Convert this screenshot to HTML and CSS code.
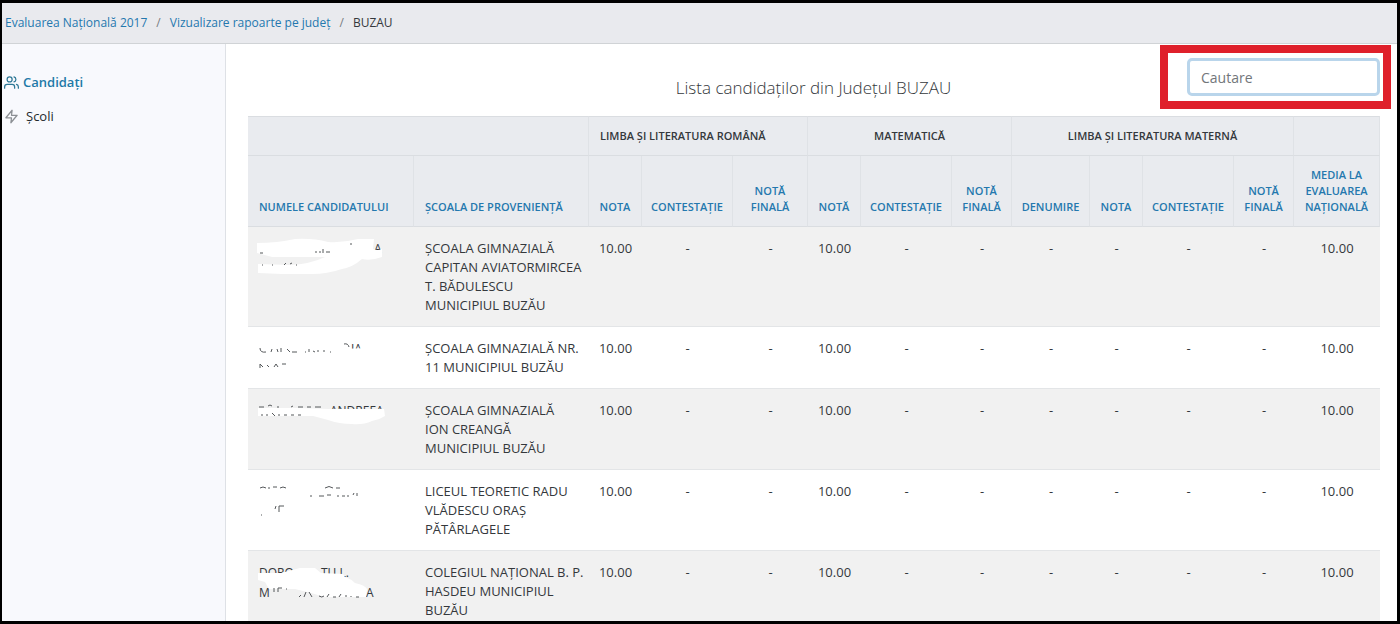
FILE: index.html
```html
<!DOCTYPE html>
<html lang="ro">
  <head>
    <meta charset="utf-8">
    <title>Evaluarea Națională 2017 - BUZAU</title>
    <link rel="stylesheet" href="styles.css">
  </head>
  <body>
    <nav class="breadcrumb">
      <a href="#">Evaluarea Națională 2017</a>
      <span class="separator">/</span>
      <a href="#">Vizualizare rapoarte pe județ</a>
      <span class="separator">/</span>
      <span>BUZAU</span>
    </nav>

    <div class="page">
      <nav class="sidebar">
        <a href="#" class="menu-item active">
          <svg class="menu-icon" viewBox="0 0 24 24">
            <path d="M17 21v-2a4 4 0 0 0-4-4H5a4 4 0 0 0-4 4v2"></path>
            <circle cx="9" cy="7" r="4"></circle>
            <path d="M23 21v-2a4 4 0 0 0-3-3.87"></path>
            <path d="M16 3.13a4 4 0 0 1 0 7.75"></path>
          </svg>
          Candidați
        </a>
        <a href="#" class="menu-item">
          <svg class="menu-icon" viewBox="0 0 24 24">
            <path d="M13 2L3 14h9l-1 8 10-12h-9l1-8z"></path>
          </svg>
          <span class="menu-label">Școli</span>
        </a>
      </nav>

      <main class="content">
        <header class="content-header">
          <h1 class="title">Lista candidaților din Județul BUZAU</h1>
          <div class="search-box">
            <input type="text" class="search-input" placeholder="Cautare" aria-label="Cautare">
          </div>
        </header>

        <table class="results">
          <colgroup>
            <col class="col-name">
            <col class="col-school">
            <col class="col-grade">
            <col class="col-appeal">
            <col class="col-final-wide">
            <col class="col-grade">
            <col class="col-appeal">
            <col class="col-final">
            <col class="col-language">
            <col class="col-grade">
            <col class="col-appeal">
            <col class="col-final">
            <col class="col-average">
          </colgroup>
          <thead>
            <tr class="groups">
              <th colspan="2"></th>
              <th colspan="3" class="left">LIMBA ȘI LITERATURA ROMÂNĂ</th>
              <th colspan="3">MATEMATICĂ</th>
              <th colspan="4">LIMBA ȘI LITERATURA MATERNĂ</th>
              <th></th>
            </tr>
            <tr class="columns">
              <th class="left"><a href="#">NUMELE CANDIDATULUI</a></th>
              <th class="left"><a href="#">ȘCOALA DE PROVENIENȚĂ</a></th>
              <th><a href="#">NOTA</a></th>
              <th><a href="#">CONTESTAȚIE</a></th>
              <th><a href="#">NOTĂ FINALĂ</a></th>
              <th><a href="#">NOTĂ</a></th>
              <th><a href="#">CONTESTAȚIE</a></th>
              <th><a href="#">NOTĂ FINALĂ</a></th>
              <th><a href="#">DENUMIRE</a></th>
              <th><a href="#">NOTA</a></th>
              <th><a href="#">CONTESTAȚIE</a></th>
              <th><a href="#">NOTĂ FINALĂ</a></th>
              <th><a href="#">MEDIA LA EVALUAREA NAȚIONALĂ</a></th>
            </tr>
          </thead>
          <tbody>
            <tr>
              <td class="left">
                <svg class="hidden-name" viewBox="0 0 132 38">
                  <text x="115" y="14">A</text>
                  <path class="cover" d="M-2 4Q18 4 36 0Q54-1 69 3Q84 4 99 0L115 0L114 10Q119 12 123 10L123 18Q112 22 103 20Q94 28 83 30Q68 35 53 35L23 35L-1 34L-1 25L30 26Q52 25 66 18L13 18L-2 14Z"></path>
                  <path class="marks" d="M1 14h3M56 13h2M60 13h2M64 10v4M67 13h4M91 5h2M3 26h1M13 26h1M25 26l2-2M31 25l2-1M37 26h1"></path>
                </svg>
              </td>
              <td class="left">ŞCOALA GIMNAZIALĂ CAPITAN AVIATORMIRCEA T. BĂDULESCU MUNICIPIUL BUZĂU</td>
              <td>10.00</td><td>-</td><td>-</td>
              <td>10.00</td><td>-</td><td>-</td>
              <td>-</td><td>-</td><td>-</td><td>-</td>
              <td>10.00</td>
            </tr>
            <tr>
              <td class="left">
                <svg class="hidden-name" viewBox="0 0 132 38">
                  <text x="92" y="14">IA</text>
                  <path class="cover" d="M80 10L110 9L110 18L80 18Z"></path>
                  <path class="marks" d="M1 9q0 5 6 4M12 13l1-3M19 13l-1-3M22 9v4M28 10l3 3M33 13h5M46 13h1M50 10v3M54 12l2 1M59 11v2M64 12h2M71 13h1M85 5q4-1 5 3M1 29v-4l3 3M8 26l2 2M15 28l2-3 2 3M23 25h4"></path>
                </svg>
              </td>
              <td class="left">ŞCOALA GIMNAZIALĂ NR. 11 MUNICIPIUL BUZĂU</td>
              <td>10.00</td><td>-</td><td>-</td>
              <td>10.00</td><td>-</td><td>-</td>
              <td>-</td><td>-</td><td>-</td><td>-</td>
              <td>10.00</td>
            </tr>
            <tr>
              <td class="left">
                <svg class="hidden-name" viewBox="0 0 132 38">
                  <text x="71" y="14">ANDREEA</text>
                  <path class="cover" d="M-1 7L40 7L70 8L125 8L126 15Q120 19 113 20Q104 24 93 23Q80 23 69 19L54 15L-1 15Z"></path>
                  <path class="marks" d="M0 6h5M9 5l2-1 2 1M18 6h2M32 6l2-1M39 6h5M48 6h4M56 6h6M3 13v2M8 13v2M13 12l3 3M20 13v2M25 14h3M32 14h3M39 14h3"></path>
                </svg>
              </td>
              <td class="left">ŞCOALA GIMNAZIALĂ<br>ION CREANGĂ<br>MUNICIPIUL BUZĂU</td>
              <td>10.00</td><td>-</td><td>-</td>
              <td>10.00</td><td>-</td><td>-</td>
              <td>-</td><td>-</td><td>-</td><td>-</td>
              <td>10.00</td>
            </tr>
            <tr>
              <td class="left">
                <svg class="hidden-name" viewBox="0 0 132 38">
                  <path class="marks" d="M1 6q3-2 6 0M10 5v2M14 5h4M21 6q3-2 6 0M66 6q4-3 8 0M77 6h4M51 14h2M60 14h5M68 13h4M78 14h2M83 14h3M89 13v2M94 13l1-2M98 11v3M17 24l-1 3M20 30v-6h5M2 33h1"></path>
                </svg>
              </td>
              <td class="left">LICEUL TEORETIC RADU VLĂDESCU ORAŞ PĂTÂRLAGELE</td>
              <td>10.00</td><td>-</td><td>-</td>
              <td>10.00</td><td>-</td><td>-</td>
              <td>-</td><td>-</td><td>-</td><td>-</td>
              <td>10.00</td>
            </tr>
            <tr>
              <td class="left">
                <svg class="hidden-name" viewBox="0 0 132 38">
                  <text x="0" y="14">DORO</text>
                  <text x="62" y="14">TU L.</text>
                  <text x="0" y="34">M</text>
                  <text x="107" y="34">A</text>
                  <path class="cover" d="M-1 10L22 10L41 5L56 5L62 10L84 11L86 14Q92 16 96 20Q106 22 108 26L107 34L66 34L52 30L36 26L10 26L6 19L-1 17Z"></path>
                  <path class="marks" d="M15 25v4M19 29v-4h4M27 26h1M40 34l2-2M45 34l2-5M50 29l3 5M60 33q3 2 5 0M68 34l2-3M74 34h3M80 34l2-3M87 32v2M92 33v1M97 34h3"></path>
                </svg>
              </td>
              <td class="left">COLEGIUL NAŢIONAL B. P. HASDEU MUNICIPIUL BUZĂU</td>
              <td>10.00</td><td>-</td><td>-</td>
              <td>10.00</td><td>-</td><td>-</td>
              <td>-</td><td>-</td><td>-</td><td>-</td>
              <td>10.00</td>
            </tr>
          </tbody>
        </table>
      </main>
    </div>
  </body>
</html>
```
FILE: styles.css
```css
* {
  box-sizing: border-box;
}

body {
  margin: 0;
  height: 100vh;
  overflow: hidden;
  display: flex;
  flex-direction: column;
  border: 3px solid black;
  border-left-width: 2px;
  background-color: white;
  color: #34383c;
  font-family: 'Open Sans', 'Noto Sans', sans-serif;
  font-size: 13px;
  line-height: 19px;
}

a {
  color: #2478ae;
  text-decoration: none;
}

.breadcrumb {
  display: flex;
  flex-shrink: 0;
  gap: 9px;
  padding: 10px 3px 11px;
  background-color: #e9eaee;
  border-bottom: 1px solid #d0d3d6;
  font-size: 12px;
}

.separator {
  color: #777c82;
}

.page {
  display: flex;
  flex: 1;
  min-height: 0;
}

.sidebar {
  flex: 0 0 224px;
  padding-top: 29px;
  background-color: #f8f9fd;
  border-right: 1px solid #dee1e6;
}

.menu-item {
  display: flex;
  align-items: center;
  gap: 4px;
  margin-bottom: 15px;
  padding-left: 2px;
  color: #25292d;
}

.menu-item.active {
  color: #1f7aa8;
  font-weight: 600;
}

.menu-icon {
  width: 15px;
  height: 15px;
  fill: none;
  stroke: #8b8f94;
  stroke-width: 2;
  stroke-linecap: round;
  stroke-linejoin: round;
}

.active .menu-icon {
  stroke: #2e7896;
}

.menu-label {
  padding-left: 3px;
}

.content {
  flex: 1;
  min-width: 0;
  padding: 1px 18px 0 22px;
}

.content-header {
  display: grid;
  grid-template-columns: 1fr auto 1fr;
  margin-bottom: 7px;
}

.title {
  grid-column: 2;
  margin: 0;
  padding-top: 31px;
  font-size: 17px;
  font-weight: 300;
  line-height: 24px;
}

.search-box {
  justify-self: end;
  margin-right: -12px;
  padding: 5px 3px 5px 19px;
  border: 8px solid #df202b;
}

.search-input {
  display: block;
  width: 193px;
  height: 38px;
  padding: 0 11px;
  border: 3px solid #b9d5eb;
  border-radius: 5px;
  color: #34383c;
  font-family: inherit;
  font-size: 14px;
  outline: none;
}

.search-input::placeholder {
  color: #72767a;
}

.results {
  width: 100%;
  table-layout: fixed;
  border-collapse: separate;
  border-spacing: 0;
  text-align: center;
}

.col-name { width: 166px; }
.col-school { width: 175px; }
.col-grade { width: 53px; }
.col-appeal { width: 91px; }
.col-final-wide { width: 75px; }
.col-final { width: 60px; }
.col-language { width: 78px; }
.col-average { width: 86px; }

th {
  padding: 11px 8px;
  background-color: #e9ebef;
  border-right: 1px solid #dfe2e6;
  border-bottom: 1px solid #dadde1;
  font-size: 11px;
  font-weight: 600;
  line-height: 16px;
  vertical-align: bottom;
}

.groups th {
  border-top: 1px solid #dadde1;
}

.columns th {
  padding: 11px 4px;
}

td {
  padding: 12px 0 11px;
  border-bottom: 1px solid #e3e5e7;
  vertical-align: top;
}

th.left,
.columns th.left,
td.left {
  padding-left: 11px;
  text-align: left;
}

tbody tr:nth-child(odd) {
  background-color: #f1f1f1;
}

/* candidate names are painted over */
.hidden-name {
  display: block;
  width: 132px;
  height: 38px;
  overflow: visible;
  fill: #34383c;
  font-size: 12px;
}

.cover {
  fill: white;
}

.marks {
  fill: none;
  stroke: #55585b;
  stroke-width: 1;
}
```
